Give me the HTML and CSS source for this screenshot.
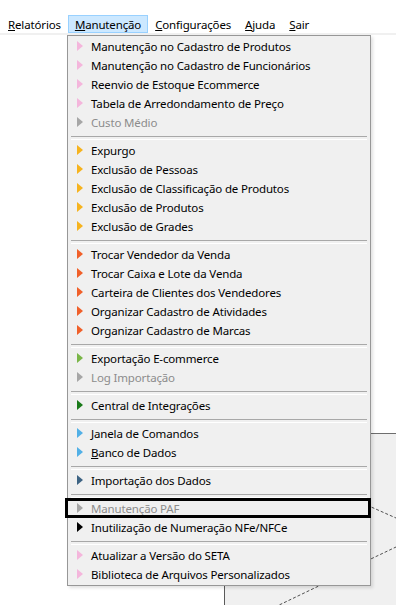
FILE: index.html
```html
<!DOCTYPE html>
<html>
<head>
    <meta charset="utf-8">
    <title>Manutenção</title>
    <link rel="stylesheet" href="styles.css">
</head>
<body>
    <div class="menubar">
        <div class="top-item"><u>R</u>elatórios</div>
        <div class="top-item open"><u>M</u>anutenção</div>
        <div class="top-item"><u>C</u>onfigurações</div>
        <div class="top-item"><u>A</u>juda</div>
        <div class="top-item"><u>S</u>air</div>
    </div>

    <div class="workspace">
        <div class="panel">
            <svg class="links" width="171" height="172">
                <line x1="110" y1="57" x2="171" y2="84"></line>
                <line x1="110" y1="142" x2="171" y2="113"></line>
                <line x1="50" y1="173" x2="100" y2="149"></line>
            </svg>
        </div>
    </div>

    <div class="dropdown">
        <div class="row"><span class="arrow pink"></span>Manutenção no Cadastro de Produtos</div>
        <div class="row"><span class="arrow pink"></span>Manutenção no Cadastro de Funcionários</div>
        <div class="row"><span class="arrow pink"></span>Reenvio de Estoque Ecommerce</div>
        <div class="row"><span class="arrow pink"></span>Tabela de Arredondamento de Preço</div>
        <div class="row disabled"><span class="arrow grey"></span>Custo Médio</div>
        <div class="sep"></div>
        <div class="row"><span class="arrow yellow"></span>Expurgo</div>
        <div class="row"><span class="arrow yellow"></span>Exclusão de Pessoas</div>
        <div class="row"><span class="arrow yellow"></span>Exclusão de Classificação de Produtos</div>
        <div class="row"><span class="arrow yellow"></span>Exclusão de Produtos</div>
        <div class="row"><span class="arrow yellow"></span>Exclusão de Grades</div>
        <div class="sep"></div>
        <div class="row"><span class="arrow orange"></span>Trocar Vendedor da Venda</div>
        <div class="row"><span class="arrow orange"></span>Trocar Caixa e Lote da Venda</div>
        <div class="row"><span class="arrow orange"></span>Carteira de Clientes dos Vendedores</div>
        <div class="row"><span class="arrow orange"></span>Organizar Cadastro de Atividades</div>
        <div class="row"><span class="arrow orange"></span>Organizar Cadastro de Marcas</div>
        <div class="sep"></div>
        <div class="row"><span class="arrow green"></span>Exportação E-commerce</div>
        <div class="row disabled"><span class="arrow grey"></span>Log Importação</div>
        <div class="sep"></div>
        <div class="row"><span class="arrow darkgreen"></span>Central de Integrações</div>
        <div class="sep"></div>
        <div class="row"><span class="arrow blue"></span><u>J</u>anela de Comandos</div>
        <div class="row"><span class="arrow blue"></span><u>B</u>anco de Dados</div>
        <div class="sep"></div>
        <div class="row"><span class="arrow slate"></span>Importação dos Dados</div>
        <div class="sep"></div>
        <div class="row disabled focused"><span class="arrow grey"></span>Manutenção PAF</div>
        <div class="row"><span class="arrow black"></span>Inutilização de Numeração NFe/NFCe</div>
        <div class="sep"></div>
        <div class="row"><span class="arrow pink"></span>Atualizar a Versão do SETA</div>
        <div class="row"><span class="arrow pink"></span>Biblioteca de Arquivos Personalizados</div>
    </div>
</body>
</html>
```

FILE: styles.css
```css
*{
    margin: 0;
    padding: 0;
    box-sizing: border-box;
}
body{
    background: #ffffff;
    color: #000000;
    font-family: "Noto Sans", "Open Sans", sans-serif;
    font-size: 11.5px;
    letter-spacing: -0.15px;
    height: 605px;
    overflow: hidden;
    position: relative;
}

/* top menu */
.menubar{
    display: flex;
    padding: 15px 0 0 0;
    border-bottom: 2px solid #f0f0f0;
}
.top-item{
    height: 18px;
    line-height: 17px;
    padding: 0 6px;
    border: 1px solid transparent;
    white-space: nowrap;
}
.top-item:first-child{
    padding-left: 7px;
}
.top-item.open{
    background: #cce8ff;
    border-color: #99d1ff;
}

/* area behind the menu */
.workspace{
    padding: 398px 0 0 224px;
}
.panel{
    position: relative;
    height: 200px;
    background: #f0f0f0;
    border-top: 1px solid #6e6e6e;
    border-left: 1px solid #5a5a5a;
}
.links{
    position: absolute;
    left: 0;
    top: 0;
}
.links line{
    stroke: #505050;
    stroke-width: 1;
    stroke-dasharray: 3 2;
}

/* dropdown */
.dropdown{
    position: absolute;
    left: 67px;
    top: 35px;
    width: 304px;
    padding: 1px 0;
    background: #f0f0f0;
    border: 1px solid #979797;
    box-shadow: 2px 2px 3px rgba(0,0,0,0.12);
}
.row{
    position: relative;
    display: flex;
    align-items: center;
    height: 19px;
    padding: 0 0 1px 9px;
    white-space: nowrap;
}
.row.disabled{
    color: #8c8c8c;
}
.row.focused::after{
    content: "";
    position: absolute;
    left: -3px;
    right: -1px;
    top: -1px;
    bottom: 0;
    border: 3px solid #000000;
}
.arrow{
    width: 0;
    height: 0;
    margin-right: 8px;
    border-left: 6px solid #000000;
    border-top: 5px solid transparent;
    border-bottom: 5px solid transparent;
}
.arrow.pink{ border-left-color: #f4b6dc; }
.arrow.grey{ border-left-color: #a6a6a6; }
.arrow.yellow{ border-left-color: #f6b31e; }
.arrow.orange{ border-left-color: #f0602a; }
.arrow.green{ border-left-color: #7ab648; }
.arrow.darkgreen{ border-left-color: #1a7a1a; }
.arrow.blue{ border-left-color: #52b0e6; }
.arrow.slate{ border-left-color: #3d6383; }
.arrow.black{ border-left-color: #000000; }

.sep{
    height: 9px;
    margin: 0 3px;
    padding-top: 4px;
}
.sep::before{
    content: "";
    display: block;
    height: 2px;
    border-top: 1px solid #a8a8a8;
    border-bottom: 1px solid #ffffff;
}
```
